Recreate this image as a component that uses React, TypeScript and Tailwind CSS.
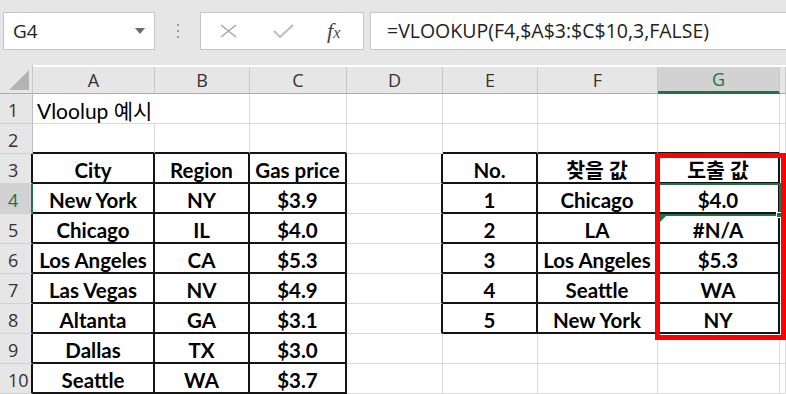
import React from "react";

// Column letters shown in the header row; the last column (H) is only a sliver.
const COL_LETTERS = ["A", "B", "C", "D", "E", "F", "G", ""];

// Sheet contents keyed by row number, then by column index (1 = A).
const DATA: Record<number, Record<number, string>> = {
  3: { 1: "City", 2: "Region", 3: "Gas price", 5: "No.", 6: "찾을 값", 7: "도출 값" },
  4: { 1: "New York", 2: "NY", 3: "$3.9", 5: "1", 6: "Chicago", 7: "$4.0" },
  5: { 1: "Chicago", 2: "IL", 3: "$4.0", 5: "2", 6: "LA", 7: "#N/A" },
  6: { 1: "Los Angeles", 2: "CA", 3: "$5.3", 5: "3", 6: "Los Angeles", 7: "$5.3" },
  7: { 1: "Las Vegas", 2: "NV", 3: "$4.9", 5: "4", 6: "Seattle", 7: "WA" },
  8: { 1: "Altanta", 2: "GA", 3: "$3.1", 5: "5", 6: "New York", 7: "NY" },
  9: { 1: "Dallas", 2: "TX", 3: "$3.0" },
  10: { 1: "Seattle", 2: "WA", 3: "$3.7" },
};

// Two bordered ranges: A3:C10 and E3:G8.
function inTable(r: number, c: number) {
  return (c >= 1 && c <= 3 && r >= 3 && r <= 10) || (c >= 5 && c <= 7 && r >= 3 && r <= 8);
}

const CELL_FONT = "font-['Lato','Noto_Sans_CJK_KR',sans-serif]";
const UI_FONT = "font-['Open_Sans','Noto_Sans',sans-serif]";

function DataCell({ r, c }: { r: number; c: number }) {
  const right = inTable(r, c) || inTable(r, c + 1);
  const bottom = inTable(r, c) || inTable(r + 1, c);
  const rCls = r === 1 && c === 1
    ? "border-r border-r-transparent"
    : right
    ? "border-r-2 border-r-[#141414]"
    : "border-r border-r-[#dadada]";
  const bCls = bottom ? "border-b-2 border-b-[#141414]" : "border-b border-b-[#dadada]";
  const text = r === 1 && c === 1 ? "Vloolup 예시" : DATA[r]?.[c] ?? "";
  const align =
    r === 1 ? "justify-start pl-[4px] font-normal text-[21px]" : "justify-center font-bold text-[20.5px]";
  return (
    <div
      className={`${rCls} ${bCls} ${align} ${CELL_FONT} flex items-center pt-[4px] whitespace-nowrap overflow-visible text-black leading-none`}
    >
      {text}
    </div>
  );
}

function RowHeader({ r }: { r: number }) {
  const selected = r === 4;
  const right = selected
    ? "border-r-2 border-r-[#217346]"
    : inTable(r, 1)
    ? "border-r-2 border-r-[#141414]"
    : "border-r border-r-[#bdbdbd]";
  return (
    <div
      className={`${right} border-b border-b-[#d0d0d0] ${
        selected ? "bg-[#d2d2d2] text-[#217346]" : "bg-[#e6e6e6] text-[#333]"
      } ${UI_FONT} flex items-center pl-[8px] pt-[2px] text-[18px] leading-none`}
    >
      {r}
    </div>
  );
}

function ColHeader({ letter, idx }: { letter: string; idx: number }) {
  const selected = idx === 6;
  return (
    <div
      className={`${
        selected
          ? "bg-[#d2d2d2] text-[#217346] border-b-[3px] border-b-[#217346]"
          : "bg-[#e6e6e6] text-[#333] border-b border-b-[#ababab]"
      } border-r border-r-[#c8c8c8] mt-[2px] ${UI_FONT} flex items-center justify-center text-[18px] leading-none`}
    >
      {letter}
    </div>
  );
}

export default function App() {
  const rows = Array.from({ length: 10 }, (_, i) => i + 1);
  const cols = Array.from({ length: 8 }, (_, i) => i + 1);
  return (
    <div className="relative w-[786px] h-[394px] overflow-hidden bg-white">
      {/* Name box and formula bar */}
      <div className={`h-[65px] bg-[#e6e6e6] flex items-start pt-[12px] ${UI_FONT}`}>
        <div className="ml-[3px] w-[152px] h-[38px] bg-white border border-[#c6c6c6] flex items-center justify-between pl-[9px] pr-[9px]">
          <span className="text-[19px] text-[#222]">G4</span>
          <svg width="10" height="6" viewBox="0 0 10 6">
            <polygon points="0,0 10,0 5,6" fill="#6b6b6b" />
          </svg>
        </div>
        <div className="w-[45px] h-[38px] flex flex-col items-center justify-center gap-[4px]">
          <span className="w-[2px] h-[2px] bg-[#9a9a9a]" />
          <span className="w-[2px] h-[2px] bg-[#9a9a9a]" />
          <span className="w-[2px] h-[2px] bg-[#9a9a9a]" />
        </div>
        <div className="w-[164px] h-[38px] bg-white border border-[#c6c6c6] flex items-center pl-[19px]">
          <svg width="17" height="14" viewBox="0 0 17 14">
            <path d="M1 1 L16 13 M16 1 L1 13" stroke="#a8a8a8" strokeWidth="1.6" fill="none" />
          </svg>
          <svg className="ml-[36px]" width="21" height="14" viewBox="0 0 21 14">
            <path d="M1 7 L7 13 L20 1" stroke="#bdbdbd" strokeWidth="2" fill="none" />
          </svg>
          <span className="ml-[33px] font-['Liberation_Serif',serif] italic text-[22px] text-[#444] leading-none">
            f<span className="text-[16px]">x</span>
          </span>
        </div>
        <div className="ml-[6px] flex-1 h-[38px] bg-white border border-[#c6c6c6] border-r-0 flex items-center pl-[16px]">
          <span className="text-[19.5px] text-[#222] whitespace-nowrap">=VLOOKUP(F4,$A$3:$C$10,3,FALSE)</span>
        </div>
      </div>

      {/* Worksheet grid */}
      <div className="grid grid-cols-[33px_122px_95px_97px_96px_95px_120px_122px_6px] grid-rows-[29px_repeat(10,30px)]">
        <div className="bg-[#e6e6e6] border-r border-r-[#c8c8c8] border-b border-b-[#ababab] flex items-end justify-end pr-[3px] pb-[3px]">
          <svg width="20" height="20" viewBox="0 0 20 20">
            <polygon points="20,0 20,20 0,20" fill="#b4b4b4" />
          </svg>
        </div>
        {COL_LETTERS.map((l, i) => (
          <ColHeader key={i} letter={l} idx={i} />
        ))}
        {rows.map((r) => (
          <React.Fragment key={r}>
            <RowHeader r={r} />
            {cols.map((c) => (
              <DataCell key={c} r={r} c={c} />
            ))}
          </React.Fragment>
        ))}
      </div>

      {/* Active cell G4 with its fill handle */}
      <div className="absolute left-[656px] top-[183px] w-[125px] h-[33px] border-2 border-[#217346]" />
      <div className="absolute left-[776px] top-[212px] w-[6px] h-[6px] bg-[#217346] border border-white" />
      {/* Error indicator on G5 */}
      <svg className="absolute left-[659px] top-[216px]" width="7" height="7" viewBox="0 0 7 7">
        <polygon points="0,0 7,0 0,7" fill="#217346" />
      </svg>

      {/* Highlight around the result column */}
      <div className="absolute left-[655px] top-[153px] w-[131px] h-[187px] border-[5px] border-[#ff0000]" />
    </div>
  );
}
